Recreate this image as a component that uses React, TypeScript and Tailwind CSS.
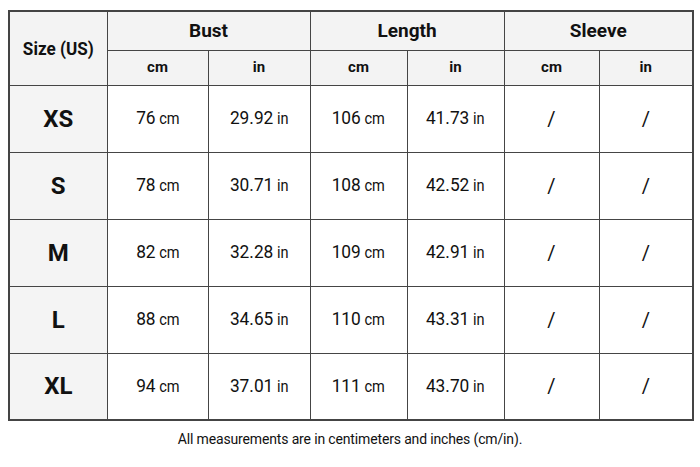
import React from 'react';

const rows = [
  { size: 'XS', bust: ['76', '29.92'], length: ['106', '41.73'] },
  { size: 'S', bust: ['78', '30.71'], length: ['108', '42.52'] },
  { size: 'M', bust: ['82', '32.28'], length: ['109', '42.91'] },
  { size: 'L', bust: ['88', '34.65'], length: ['110', '43.31'] },
  { size: 'XL', bust: ['94', '37.01'], length: ['111', '43.70'] },
];

const Value = ({ num, unit }: { num: string; unit: string }) => (
  <span className="inline-block scale-x-[0.91]">
    <span className="text-[19px]">{num}</span>
    <span className="text-[16px]"> {unit}</span>
  </span>
);

const cell = 'border border-[#454545] text-center';

export default function App() {
  return (
    <div
      className="w-[700px] h-[467px] bg-white text-[#111] pt-[10px] px-[8px]"
      style={{ fontFamily: 'Roboto, "Liberation Sans", sans-serif' }}
    >
      <table className="w-[684px] table-fixed border-collapse border-2 border-[#444]">
        <colgroup>
          <col className="w-[98px]" />
          <col className="w-[101px]" />
          <col className="w-[102px]" />
          <col className="w-[97px]" />
          <col className="w-[97px]" />
          <col className="w-[95px]" />
          <col className="w-[94px]" />
        </colgroup>
        <thead>
          <tr className="h-[39px] bg-[#f3f3f3]">
            <th rowSpan={2} className={`${cell} text-[18px] font-bold`}>
              <span className="inline-block scale-x-[0.95]">Size (US)</span>
            </th>
            <th colSpan={2} className={`${cell} text-[19px] font-bold`}>Bust</th>
            <th colSpan={2} className={`${cell} text-[19px] font-bold`}>Length</th>
            <th colSpan={2} className={`${cell} text-[19px] font-bold`}>Sleeve</th>
          </tr>
          <tr className="h-[35px] bg-[#f3f3f3]">
            {['cm', 'in', 'cm', 'in', 'cm', 'in'].map((u, i) => (
              <th key={i} className={`${cell} text-[15px] font-bold`}>{u}</th>
            ))}
          </tr>
        </thead>
        <tbody>
          {rows.map((r) => (
            <tr key={r.size} className="h-[67px]">
              <td className={`${cell} bg-[#f4f4f4] text-[24px] font-bold`}>{r.size}</td>
              <td className={cell}><Value num={r.bust[0]} unit="cm" /></td>
              <td className={cell}><Value num={r.bust[1]} unit="in" /></td>
              <td className={cell}><Value num={r.length[0]} unit="cm" /></td>
              <td className={cell}><Value num={r.length[1]} unit="in" /></td>
              <td className={`${cell} text-[20px]`}>/</td>
              <td className={`${cell} text-[20px]`}>/</td>
            </tr>
          ))}
        </tbody>
      </table>
      <p className="text-center text-[14px] mt-[8px] tracking-[-0.15px]">
        All measurements are in centimeters and inches (cm/in).
      </p>
    </div>
  );
}
